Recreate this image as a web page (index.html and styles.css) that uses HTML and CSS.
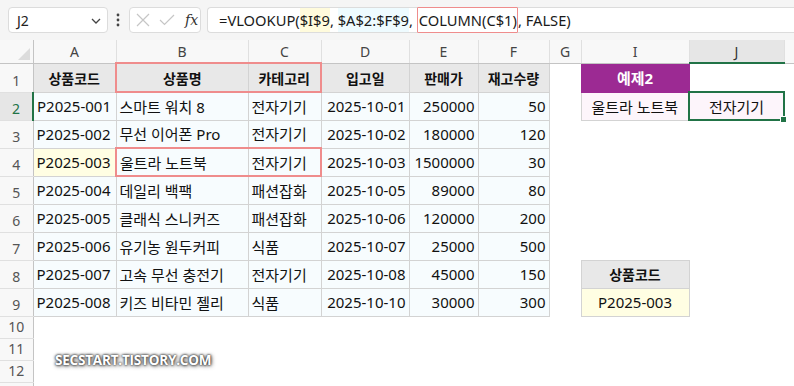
FILE: index.html
```html
<!DOCTYPE html>
<html lang="ko">
<head>
<meta charset="utf-8">
<link rel="stylesheet" href="styles.css">
</head>
<body>
<div class="app">
  <div class="fbar">
    <div class="namebox">
      <span class="nb-text">J2</span>
      <svg class="chev" width="10" height="6" viewBox="0 0 10 6"><path d="M1 1 L5 5 L9 1" fill="none" stroke="#444" stroke-width="1.3"/></svg>
    </div>
    <svg class="dots" width="4" height="14" viewBox="0 0 4 14"><circle cx="2" cy="2" r="1.4" fill="#444"/><circle cx="2" cy="7" r="1.4" fill="#444"/><circle cx="2" cy="12" r="1.4" fill="#444"/></svg>
    <div class="btns">
      <svg width="14" height="14" viewBox="0 0 14 14"><path d="M1 1 L13 13 M13 1 L1 13" stroke="#c6c6c6" stroke-width="1.2" fill="none"/></svg>
      <svg width="16" height="12" viewBox="0 0 16 12"><path d="M1 6 L5.5 10.5 L15 1" stroke="#c6c6c6" stroke-width="1.2" fill="none"/></svg>
      <span class="fx">fx</span>
    </div>
    <div class="formula">
      <span class="ftxt">=VLOOKUP(<span class="hl-y">$I$9</span>, <span class="hl-c">$A$2:$F$9</span>, <span class="hl-r">COLUMN(C$1)</span>, FALSE)</span>
    </div>
  </div>
  <div class="sheet">
    <table class="grid">
      <colgroup>
        <col class="w-rh"><col class="w-a"><col class="w-b"><col class="w-c"><col class="w-d"><col class="w-e"><col class="w-f"><col class="w-g"><col class="w-i"><col class="w-j"><col class="w-k">
      </colgroup>
      <tr class="hdr">
        <th class="corner"><span class="tri"></span></th>
        <th>A</th><th>B</th><th>C</th><th>D</th><th>E</th><th>F</th><th>G</th><th>I</th><th class="sel-col">J</th><th class="last"></th>
      </tr>
      <tr class="r29">
        <td class="rh">1</td>
        <td class="c h">상품코드</td>
        <td class="c h red-l">상품명</td>
        <td class="c h red-r">카테고리</td>
        <td class="c h">입고일</td>
        <td class="c h">판매가</td>
        <td class="c h">재고수량</td>
        <td></td>
        <td class="c purple">예제2</td>
        <td></td><td></td>
      </tr>
      <tr class="r28">
        <td class="rh sel-row">2</td>
        <td class="c">P2025-001</td><td class="c">스마트 워치 8</td><td class="c">전자기기</td>
        <td class="c num">2025-10-01</td><td class="c num">250000</td><td class="c num">50</td>
        <td></td>
        <td class="c pink ctr">울트라 노트북</td>
        <td class="c pink ctr active">전자기기<span class="handle"></span></td>
        <td></td>
      </tr>
      <tr class="r28">
        <td class="rh">3</td>
        <td class="c">P2025-002</td><td class="c">무선 이어폰 Pro</td><td class="c">전자기기</td>
        <td class="c num">2025-10-02</td><td class="c num">180000</td><td class="c num">120</td>
        <td></td><td></td><td></td><td></td>
      </tr>
      <tr class="r28">
        <td class="rh">4</td>
        <td class="c yellow">P2025-003</td><td class="c red-l">울트라 노트북</td><td class="c red-r">전자기기</td>
        <td class="c num">2025-10-03</td><td class="c num">1500000</td><td class="c num">30</td>
        <td></td><td></td><td></td><td></td>
      </tr>
      <tr class="r28">
        <td class="rh">5</td>
        <td class="c">P2025-004</td><td class="c">데일리 백팩</td><td class="c">패션잡화</td>
        <td class="c num">2025-10-05</td><td class="c num">89000</td><td class="c num">80</td>
        <td></td><td></td><td></td><td></td>
      </tr>
      <tr class="r28">
        <td class="rh">6</td>
        <td class="c">P2025-005</td><td class="c">클래식 스니커즈</td><td class="c">패션잡화</td>
        <td class="c num">2025-10-06</td><td class="c num">120000</td><td class="c num">200</td>
        <td></td><td></td><td></td><td></td>
      </tr>
      <tr class="r28">
        <td class="rh">7</td>
        <td class="c">P2025-006</td><td class="c">유기농 원두커피</td><td class="c">식품</td>
        <td class="c num">2025-10-07</td><td class="c num">25000</td><td class="c num">500</td>
        <td></td><td></td><td></td><td></td>
      </tr>
      <tr class="r28">
        <td class="rh">8</td>
        <td class="c">P2025-007</td><td class="c">고속 무선 충전기</td><td class="c">전자기기</td>
        <td class="c num">2025-10-08</td><td class="c num">45000</td><td class="c num">150</td>
        <td></td>
        <td class="c h">상품코드</td>
        <td></td><td></td>
      </tr>
      <tr class="r28">
        <td class="rh">9</td>
        <td class="c">P2025-008</td><td class="c">키즈 비타민 젤리</td><td class="c">식품</td>
        <td class="c num">2025-10-10</td><td class="c num">30000</td><td class="c num">300</td>
        <td></td>
        <td class="c yellow ctr">P2025-003</td>
        <td></td><td></td>
      </tr>
      <tr class="r22"><td class="rh">10</td><td></td><td></td><td></td><td></td><td></td><td></td><td></td><td></td><td></td><td></td></tr>
      <tr class="r22"><td class="rh">11</td><td></td><td></td><td></td><td></td><td></td><td></td><td></td><td></td><td></td><td></td></tr>
      <tr class="r22"><td class="rh">12</td><td></td><td></td><td></td><td></td><td></td><td></td><td></td><td></td><td></td><td></td></tr>
      <tr class="r22"><td class="rh"></td><td></td><td></td><td></td><td></td><td></td><td></td><td></td><td></td><td></td><td></td></tr>
    </table>
    <div class="watermark">SECSTART.TISTORY.COM</div>
  </div>
</div>
</body>
</html>
```
FILE: styles.css
```css
html, body {
  margin: 0;
  padding: 0;
  background: #ffffff;
  overflow: hidden;
}
.app {
  width: 794px;
  height: 386px;
  overflow: hidden;
  font-family: "Noto Sans", "Noto Sans CJK KR", sans-serif;
  color: #1a1a1a;
}
.fbar {
  height: 40px;
  background: #f5f5f5;
  display: flex;
  align-items: center;
  padding: 0 0 0 8px;
  box-sizing: border-box;
}
.namebox {
  width: 100px;
  height: 26px;
  box-sizing: border-box;
  background: #fff;
  border: 1px solid #dcdcdc;
  border-radius: 4px;
  display: flex;
  align-items: center;
  justify-content: space-between;
  padding: 0 6px 0 8px;
  font-size: 14px;
  color: #222;
}
.chev { margin-top: 1px; }
.dots { margin: 0 9px 0 8px; }
.btns {
  width: 72px;
  height: 26px;
  box-sizing: border-box;
  background: #fff;
  border: 1px solid #dcdcdc;
  border-radius: 4px;
  display: flex;
  align-items: center;
  gap: 9px;
  padding: 0 0 0 6px;
}
.fx {
  font-family: "DejaVu Serif", "Liberation Serif", serif;
  font-style: italic;
  font-size: 14px;
  color: #333;
  margin-left: 1px;
}
.formula {
  margin-left: 6px;
  flex: 1;
  height: 26px;
  box-sizing: border-box;
  background: #fff;
  border: 1px solid #dcdcdc;
  border-right: none;
  border-radius: 4px 0 0 4px;
  display: flex;
  align-items: stretch;
  padding-left: 11px;
  font-size: 14.7px;
  color: #1a1a1a;
  white-space: nowrap;
}
.ftxt {
  display: flex;
  align-items: center;
  white-space: pre;
}
.hl-y, .hl-c, .hl-r {
  display: flex;
  align-items: center;
  align-self: stretch;
}
.hl-y { background: #fffbdc; }
.hl-c { background: #eefbff; }
.hl-r {
  border: 1.5px solid #ef8c8c;
  margin: -1px 0;
  padding: 0 0 0 1px;
  border-radius: 1px;
}

/* grid */
.sheet {
  position: relative;
}
.grid {
  border-collapse: collapse;
  table-layout: fixed;
  width: 843px;
  font-size: 15px;
}
.w-rh { width: 33px; }
.w-a { width: 83px; }
.w-b { width: 132px; }
.w-c { width: 73px; }
.w-d { width: 88px; }
.w-e { width: 69px; }
.w-f { width: 71px; }
.w-g { width: 32px; }
.w-i { width: 108px; }
.w-j { width: 95px; }
.w-k { width: 59px; }

.grid td, .grid th {
  padding: 0;
  white-space: nowrap;
  overflow: hidden;
}
.hdr { height: 23px; }
.hdr th {
  background: #f8f8f8;
  font-weight: normal;
  font-size: 14px;
  color: #444;
  text-align: center;
  border-right: 1px solid #e0e0e0;
  border-bottom: 1px solid #c4c4c4;
}
.hdr th.corner {
  position: relative;
  border-right: 1px solid #c4c4c4;
}
.tri {
  position: absolute;
  right: 3px;
  bottom: 3px;
  width: 0;
  height: 0;
  border-left: 12px solid transparent;
  border-bottom: 12px solid #dcdcdc;
}
.hdr th.sel-col {
  background: #e6e6e6;
  border-bottom: 2px solid #217346;
  color: #333;
}
.hdr th.last { border-right: none; }
.r29 { height: 29px; }
.r28 { height: 28px; }
.r22 { height: 22px; }
.grid td.rh {
  background: #f8f8f8;
  text-align: center;
  vertical-align: bottom;
  padding-bottom: 2px;
  font-size: 14px;
  color: #555;
  border-right: 1px solid #c4c4c4;
  border-bottom: 1px solid #e0e0e0;
}
.grid td.rh.sel-row {
  background: #e6e6e6;
  color: #217346;
  border-right: 2px solid #217346;
}
.grid td.c {
  background: #f7fcfe;
  border: 1px solid #d3d3d3;
  padding: 0 3px;
  color: #111;
}
.grid td.h {
  background: #e8e8e8;
  font-weight: bold;
  font-size: 14px;
  text-align: center;
}
.grid td.num { text-align: right; }
.grid td.ctr { text-align: center; }
.grid td.yellow { background: #fffee3; }
.grid td.pink { background: #fdf5fb; }
.grid td.purple {
  background: #9c2a93;
  color: #fff;
  font-weight: bold;
  text-align: center;
  border-color: #9c2a93;
}
.grid td.red-l {
  border-top: 2px solid #ef8c8c;
  border-bottom: 2px solid #ef8c8c;
  border-left: 2px solid #ef8c8c;
}
.grid td.red-r {
  border-top: 2px solid #ef8c8c;
  border-bottom: 2px solid #ef8c8c;
  border-right: 2px solid #ef8c8c;
}
.grid td.active {
  position: relative;
  overflow: visible;
  border: 2px solid #217346;
}
.handle {
  position: absolute;
  right: -4px;
  bottom: -4px;
  width: 5px;
  height: 5px;
  background: #217346;
  border: 1px solid #fff;
}
.watermark {
  position: absolute;
  left: 55px;
  top: 311px;
  font-family: "Open Sans", "Noto Sans", sans-serif;
  font-weight: bold;
  font-size: 13.5px;
  letter-spacing: -0.2px;
  color: #ffffff;
  text-shadow: 0 0 2px #333, 0 0 3px #444, 1px 1px 4px #555;
}
```
